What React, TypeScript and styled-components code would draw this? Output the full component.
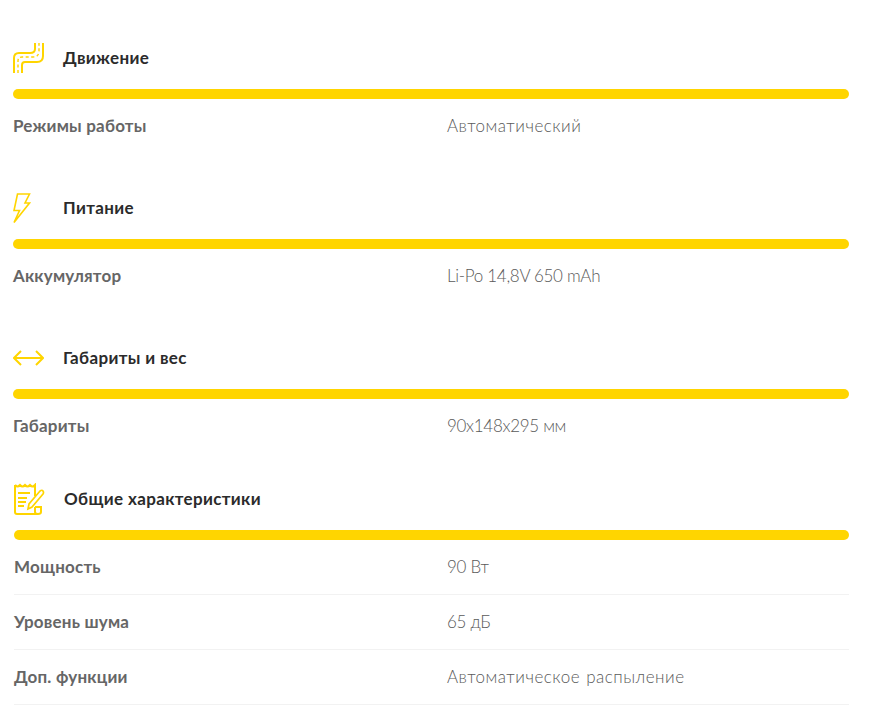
import {ReactElement, ReactNode} from "react";
import styled, {createGlobalStyle} from "styled-components";

const GlobalStyle = createGlobalStyle`
  body {
    margin: 0;
    background: #fff;
    font-family: "Lato", "Liberation Sans", sans-serif;
  }
`

const Page = styled.div`
  width: 874px;
  height: 710px;
  overflow: hidden;
  padding: 38px 25px 0 13px;
  box-sizing: border-box;
`

const Section = styled.section<{$gap: number; $inset?: boolean}>`
  margin-bottom: ${({$gap}) => $gap}px;
  padding-left: ${({$inset}) => ($inset ? "1px" : "0")};
`

const Heading = styled.div`
  height: 40px;
  margin-bottom: 11px;
  display: flex;
  align-items: center;
`

const IconBox = styled.div`
  width: 50px;
  height: 32px;
  flex: none;
  display: flex;
  align-items: center;
`

const Title = styled.h3`
  margin: 0 0 1px;
  font-size: 17px;
  line-height: 20px;
  letter-spacing: 0.35px;
  font-weight: 700;
  color: #2b2b2b;
`

const Bar = styled.div`
  height: 10px;
  border-radius: 5px;
  background: #ffd500;
`

const Row = styled.div<{$lined?: boolean}>`
  height: 55px;
  box-sizing: border-box;
  display: flex;
  align-items: center;
  padding-bottom: 1px;
  border-bottom: 1px solid ${({$lined}) => ($lined ? "#f2f2f2" : "transparent")};
`

const Label = styled.div<{$inset?: boolean}>`
  width: ${({$inset}) => ($inset ? "433px" : "434px")};
  flex: none;
  font-size: 17px;
  line-height: 20px;
  letter-spacing: 0.2px;
  font-weight: 700;
  color: #666;
`

const Value = styled.div<{$numeric?: boolean}>`
  font-size: 17px;
  line-height: 20px;
  letter-spacing: ${({$numeric}) => ($numeric ? "-0.3px" : "0.5px")};
  word-spacing: ${({$numeric}) => ($numeric ? "0" : "1px")};
  font-weight: 300;
  color: #5a5a5a;
`

const iconProps = {
    fill: "none",
    stroke: "#ffd500",
    strokeWidth: 2,
}

const RoadIcon = (): ReactElement => (
    <svg width="31" height="31" viewBox="0 0 31 31" {...iconProps}>
        <path d="M1 30V15q0-5 5-5h11q5 0 5-4V0"/>
        <path d="M9 30V22q0-3 3-3h12q6 0 6-6V0"/>
        <path d="M5 30V18q0-4 4-4h11q6 0 6-6V0" strokeDasharray="3 2.5" strokeWidth="1.4"/>
    </svg>
)

const BoltIcon = (): ReactElement => (
    <svg width="18" height="31" viewBox="0 0 18 31" {...iconProps} strokeWidth="1.6">
        <path d="M4.5 1h12l-4.5 9h4.5L1 29.5l5.5-12H1z"/>
    </svg>
)

const ArrowsIcon = (): ReactElement => (
    <svg width="31" height="16" viewBox="0 0 31 16" {...iconProps}>
        <path d="M1 8h29M8 1L1 8l7 7M23 1l7 7-7 7"/>
    </svg>
)

const NoteIcon = (): ReactElement => (
    <svg width="31" height="32" viewBox="0 0 31 32" {...iconProps}>
        <path d="M1 2v27q0 2 2 2h21"/>
        <path d="M1 2q2.500 3 5 0q2.500 3 5 0q2.500 3 5 0q2.500 3 5 0v11"/>
        <path d="M21 24v5q0 2 3 2q3 0 3-2v-5h-6"/>
        <path d="M4 10h12M4 15h9M4 19h8M4 23h6"/>
        <path d="M14 26l1-5L26 8q2-1.500 3 0t0 3L18 24z" strokeWidth="1.7"/>
    </svg>
)

interface GroupProps {
    icon: ReactNode;
    title: string;
    rows: [string, string, boolean?][];
    gap?: number;
    last?: boolean;
}

const Group = ({icon, title, rows, gap = 34, last}: GroupProps): ReactElement => (
    <Section $gap={gap} $inset={last}>
        <Heading>
            <IconBox>{icon}</IconBox>
            <Title>{title}</Title>
        </Heading>
        <Bar/>
        {rows.map(([label, value, numeric]) => (
            <Row key={label} $lined={last}>
                <Label $inset={last}>{label}</Label>
                <Value $numeric={numeric}>{value}</Value>
            </Row>
        ))}
    </Section>
)

const App = (): ReactElement => (
    <Page>
        <GlobalStyle/>
        <Group icon={<RoadIcon/>} title="Движение" rows={[["Режимы работы", "Автоматический"]]}/>
        <Group icon={<BoltIcon/>} title="Питание" rows={[["Аккумулятор", "Li-Po 14,8V 650 mAh", true]]}/>
        <Group icon={<ArrowsIcon/>} title="Габариты и вес" gap={25} rows={[["Габариты", "90x148x295 мм", true]]}/>
        <Group
            last
            icon={<NoteIcon/>}
            title="Общие характеристики"
            gap={0}
            rows={[
                ["Мощность", "90 Вт", true],
                ["Уровень шума", "65 дБ", true],
                ["Доп. функции", "Автоматическое распыление"],
            ]}
        />
    </Page>
)

export default App
